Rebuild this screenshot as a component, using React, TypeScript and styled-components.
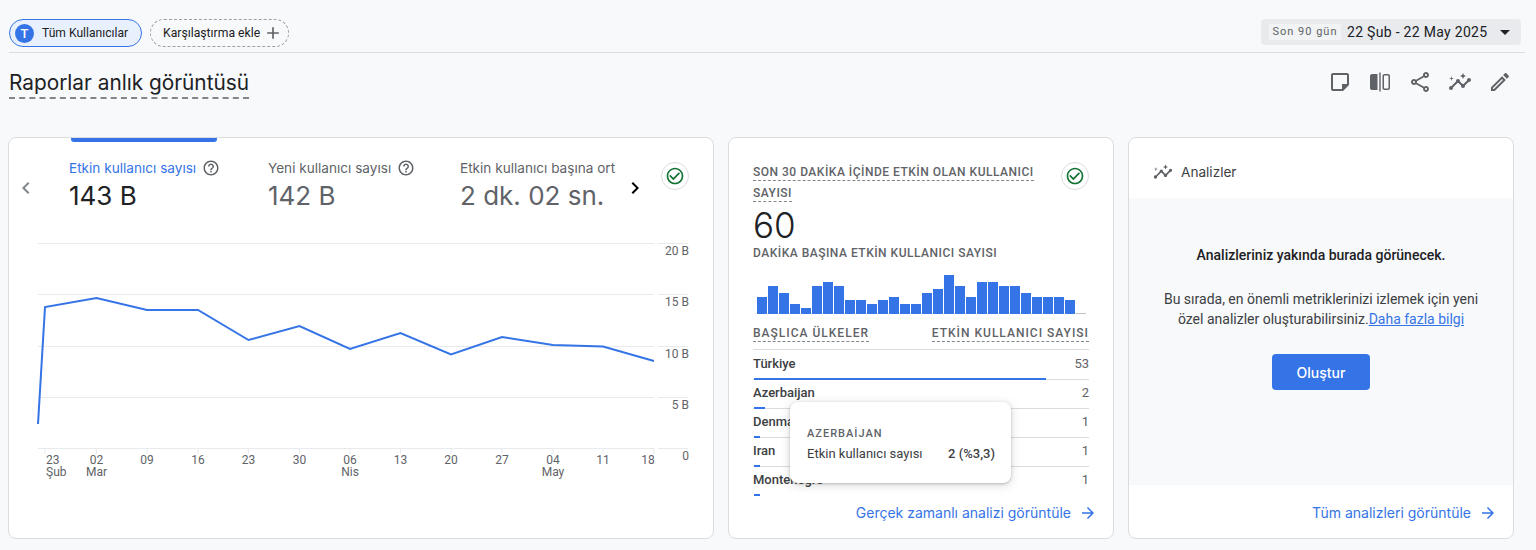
import React from "react";
import styled, { createGlobalStyle } from "styled-components";
import {
	MdAdd,
	MdArrowDropDown,
	MdArrowForward,
	MdCheckCircleOutline,
	MdChevronLeft,
	MdChevronRight,
	MdHelpOutline,
	MdOutlineEdit,
	MdOutlineInsights,
	MdOutlineShare,
} from "react-icons/md";

const BLUE = "#3574e6";
const GREY = "#5f6368";
const DARK = "#202124";
const DISPLAY = `Inter, "Noto Sans", sans-serif`;

const GRID_Y = [243.5, 294.5, 346.5, 397.5, 448.5];
const Y_LABELS = ["20 B", "15 B", "10 B", "5 B", "0"];
const X_TICKS = [
	{ x: 45, day: "23", month: "Şub" },
	{ x: 96.5, day: "02", month: "Mar" },
	{ x: 147, day: "09" },
	{ x: 198, day: "16" },
	{ x: 248.5, day: "23" },
	{ x: 299.5, day: "30" },
	{ x: 350, day: "06", month: "Nis" },
	{ x: 400.5, day: "13" },
	{ x: 451, day: "20" },
	{ x: 502, day: "27" },
	{ x: 553, day: "04", month: "May" },
	{ x: 603, day: "11" },
	{ x: 648, day: "18" },
];
const LINE =
	"38,424 45,307 96.5,298 147,310 198,310 248.5,340 299.5,326 350,349 400.5,333 451,354.5 502,337 553,345 603,346.5 654,361";
const MINUTE_BARS = [
	17, 28, 21, 10, 6, 28, 32, 28, 14, 14, 10, 14, 17, 10, 10, 21, 25, 39, 28, 17,
	32, 32, 28, 28, 21, 17, 17, 17, 14, 1,
];
const COUNTRIES = [
	{ name: "Türkiye", value: 53, width: 292 },
	{ name: "Azerbaijan", value: 2, width: 11 },
	{ name: "Denmark", value: 1, width: 6 },
	{ name: "Iran", value: 1, width: 6 },
	{ name: "Montenegro", value: 1, width: 6 },
];

const NoteIcon = () => (
	<svg width="24" height="24" viewBox="0 0 24 24" fill="#5f6368">
		<path d="M19 5v9h-5v5H5V5h14m0-2H5c-1.1 0-2 .9-2 2v14c0 1.1.9 2 2 2h10l6-6V5c0-1.1-.9-2-2-2z" />
		<path d="M15 15h5l-5 5z" />
	</svg>
);

const CompareIcon = () => (
	<svg width="24" height="24" viewBox="0 0 24 24" fill="#5f6368">
		<path d="M4 4h5.5v16H4c-1.1 0-2-.9-2-2V6c0-1.1.9-2 2-2z" />
		<path d="M11.3 2.5h1.4v19h-1.4z" />
		<path d="M20 4h-3.5c-1.1 0-2 .9-2 2v12c0 1.1.9 2 2 2H20c1.1 0 2-.9 2-2V6c0-1.1-.9-2-2-2zm.5 14c0 .3-.2.5-.5.5h-3.5c-.3 0-.5-.2-.5-.5V6c0-.3.2-.5.5-.5H20c.3 0 .5.2.5.5z" />
	</svg>
);

const App: React.FC = () => {
	return (
		<Page>
			<GlobalStyle />
			<TopBar>
				<Chips>
					<UserChip>
						<Avatar>T</Avatar>
						Tüm Kullanıcılar
					</UserChip>
					<AddChip>
						Karşılaştırma ekle
						<MdAdd size={20} color={GREY} />
					</AddChip>
				</Chips>
				<DateBox>
					<DateTag>Son 90 gün</DateTag>
					<DateText>22 Şub - 22 May 2025</DateText>
					<MdArrowDropDown size={24} color={DARK} />
				</DateBox>
			</TopBar>

			<TitleRow>
				<Title>Raporlar anlık görüntüsü</Title>
				<Actions>
					<NoteIcon />
					<CompareIcon />
					<MdOutlineShare size={24} color={GREY} />
					<MdOutlineInsights size={24} color={GREY} />
					<MdOutlineEdit size={24} color={GREY} />
				</Actions>
			</TitleRow>

			<Cards>
				<Card>
					<TabsRow>
						<Chevron $color="#80868b">
							<MdChevronLeft size={24} />
						</Chevron>
						<Tab $width={199} $active>
							<TabLabel $active>
								Etkin kullanıcı sayısı
								<MdHelpOutline size={18} color={GREY} />
							</TabLabel>
							<TabValue $active>143 B</TabValue>
						</Tab>
						<Tab $width={192}>
							<TabLabel>
								Yeni kullanıcı sayısı
								<MdHelpOutline size={18} color={GREY} />
							</TabLabel>
							<TabValue>142 B</TabValue>
						</Tab>
						<Tab $width={163}>
							<TabLabel>Etkin kullanıcı başına ort</TabLabel>
							<TabValue>2 dk. 02 sn.</TabValue>
						</Tab>
						<Chevron $color="#000">
							<MdChevronRight size={24} />
						</Chevron>
						<StatusBadge>
							<MdCheckCircleOutline size={20} color="#137333" />
						</StatusBadge>
					</TabsRow>
					<ChartSvg viewBox="9 238 704 250" width="704" height="250">
						{GRID_Y.map((y, i) => (
							<g key={y}>
								<line x1="38" x2="654" y1={y} y2={y} stroke="#e8eaed" />
								<line x1="658" x2="688" y1={y} y2={y} stroke="#e8eaed" />
								<AxisText x="689" y={y + 11.5} textAnchor="end">
									{Y_LABELS[i]}
								</AxisText>
							</g>
						))}
						{X_TICKS.map((t, i) => (
							<g key={t.x}>
								<line
									x1={i === 12 ? 654 : t.x}
									x2={i === 12 ? 654 : t.x}
									y1="448"
									y2="454"
									stroke="#e8eaed"
								/>
								<AxisText x={i === 0 ? 46 : t.x} y="464" textAnchor={i === 0 ? "start" : "middle"}>
									{t.day}
								</AxisText>
								{t.month && (
									<AxisText x={i === 0 ? 46 : t.x} y="476" textAnchor={i === 0 ? "start" : "middle"}>
										{t.month}
									</AxisText>
								)}
							</g>
						))}
						<polyline points={LINE} fill="none" stroke={BLUE} strokeWidth="2" />
					</ChartSvg>
				</Card>

				<RealtimeCard>
					<RealtimeHead>
						<RealtimeTitle>
							<Dashed>SON 30 DAKİKA İÇİNDE ETKİN OLAN KULLANICI SAYISI</Dashed>
						</RealtimeTitle>
						<StatusBadge>
							<MdCheckCircleOutline size={20} color="#137333" />
						</StatusBadge>
					</RealtimeHead>
					<BigNumber>60</BigNumber>
					<SmallHeading $spacing={0.5}>DAKİKA BAŞINA ETKİN KULLANICI SAYISI</SmallHeading>
					<Bars>
						{MINUTE_BARS.map((h, i) => (
							<MinuteBar key={i} $height={h} $empty={h === 1} />
						))}
					</Bars>
					<ListHead>
						<SmallHeading $spacing={1}>
							<Dashed>BAŞLICA ÜLKELER</Dashed>
						</SmallHeading>
						<SmallHeading $spacing={1}>
							<Dashed>ETKİN KULLANICI SAYISI</Dashed>
						</SmallHeading>
					</ListHead>
					<CountryList>
						{COUNTRIES.map((c) => (
							<CountryRow key={c.name}>
								<CountryLine>
									<CountryName>{c.name}</CountryName>
									<CountryValue>{c.value}</CountryValue>
								</CountryLine>
								<CountryBar $width={c.width} />
							</CountryRow>
						))}
					</CountryList>
					<CardLink>
						Gerçek zamanlı analizi görüntüle
						<MdArrowForward size={18} />
					</CardLink>
					<Tooltip>
						<TooltipTitle>AZERBAİJAN</TooltipTitle>
						<TooltipRow>
							<span>Etkin kullanıcı sayısı</span>
							<strong>2 (%3,3)</strong>
						</TooltipRow>
					</Tooltip>
				</RealtimeCard>

				<InsightCard>
					<InsightHead>
						<MdOutlineInsights size={20} color={GREY} />
						Analizler
					</InsightHead>
					<InsightBody>
						<InsightTitle>Analizleriniz yakında burada görünecek.</InsightTitle>
						<InsightText>
							Bu sırada, en önemli metriklerinizi izlemek için yeni özel analizler
							oluşturabilirsiniz.<InsightAnchor>Daha fazla bilgi</InsightAnchor>
						</InsightText>
						<CreateButton>Oluştur</CreateButton>
					</InsightBody>
					<InsightFoot>
						<CardLink>
							Tüm analizleri görüntüle
							<MdArrowForward size={18} />
						</CardLink>
					</InsightFoot>
				</InsightCard>
			</Cards>
		</Page>
	);
};

const GlobalStyle = createGlobalStyle`
	html, body {
		margin: 0;
		padding: 0;
		background: #f8f9fb;
	}
	body {
		font-family: Roboto, "Liberation Sans", sans-serif;
		color: ${DARK};
		overflow: hidden;
	}
`;

const Page = styled.div`
	width: 1536px;
	height: 550px;
	box-sizing: border-box;
	overflow: hidden;
`;

const TopBar = styled.div`
	display: flex;
	align-items: flex-start;
	justify-content: space-between;
	box-sizing: border-box;
	height: 34px;
	margin: 19px 11px 0 9px;
	padding-right: 4px;
	border-bottom: 1px solid #dadce0;
`;

const Chips = styled.div`
	display: flex;
	gap: 8px;
`;

const UserChip = styled.div`
	display: flex;
	align-items: center;
	box-sizing: border-box;
	width: 133px;
	height: 28px;
	padding-left: 5px;
	gap: 8px;
	border: 1px solid ${BLUE};
	border-radius: 14px;
	background: #e8f0fe;
	font-size: 12.1px;
`;

const Avatar = styled.div`
	display: flex;
	align-items: center;
	justify-content: center;
	width: 19px;
	height: 19px;
	border-radius: 50%;
	background: ${BLUE};
	color: #fff;
	font-size: 13px;
	font-weight: 500;
`;

const AddChip = styled.div`
	display: flex;
	align-items: center;
	box-sizing: border-box;
	width: 139px;
	height: 28px;
	padding-left: 12px;
	gap: 3px;
	border: 1px dashed #9aa0a6;
	border-radius: 14px;
	font-size: 12.2px;
`;

const DateBox = styled.div`
	display: flex;
	align-items: center;
	box-sizing: border-box;
	width: 260px;
	height: 26px;
	padding-left: 8px;
	border-radius: 4px;
	background: #e8eaed;
`;

const DateTag = styled.div`
	box-sizing: border-box;
	width: 72px;
	height: 16px;
	background: #f1f3f4;
	color: ${GREY};
	font-size: 11px;
	letter-spacing: 1px;
	line-height: 16px;
	text-align: center;
`;

const DateText = styled.div`
	width: 146px;
	margin-left: 6px;
	font-size: 14px;
	letter-spacing: 0.3px;
`;

const TitleRow = styled.div`
	display: flex;
	align-items: flex-start;
	justify-content: space-between;
	box-sizing: border-box;
	height: 84px;
	padding: 16px 24px 0 9px;
`;

const Title = styled.h1`
	margin: 0;
	padding-bottom: 1px;
	border-bottom: 2px dashed #80868b;
	color: ${DARK};
	font-family: ${DISPLAY};
	font-size: 20.8px;
	font-weight: 400;
	line-height: 27px;
`;

const Actions = styled.div`
	display: flex;
	gap: 16px;
	margin-top: 1px;
`;

const Cards = styled.div`
	display: grid;
	grid-template-columns: 706px 386px 386px;
	gap: 14px;
	padding-left: 8px;
`;

const Card = styled.section`
	position: relative;
	box-sizing: border-box;
	height: 402px;
	border: 1px solid #dadce0;
	border-radius: 8px;
	background: #fff;
	overflow: hidden;
`;

const TabsRow = styled.div`
	display: flex;
	align-items: flex-start;
	box-sizing: border-box;
	height: 100px;
	padding-left: 5px;
`;

const Chevron = styled.div<{ $color: string }>`
	display: flex;
	width: 24px;
	margin-top: 38px;
	color: ${(props) => props.$color};

	&:first-child {
		margin-right: 31px;
	}
`;

const Tab = styled.div<{ $width: number; $active?: boolean }>`
	position: relative;
	box-sizing: border-box;
	width: ${(props) => props.$width}px;
	padding-top: 20px;

	&::before {
		content: "";
		display: ${(props) => (props.$active ? "block" : "none")};
		position: absolute;
		top: 0;
		left: 2px;
		width: 146px;
		height: 4px;
		border-radius: 0 0 3px 3px;
		background: ${BLUE};
	}
`;

const TabLabel = styled.div<{ $active?: boolean }>`
	display: flex;
	align-items: center;
	gap: 6px;
	height: 20px;
	color: ${(props) => (props.$active ? BLUE : GREY)};
	font-family: ${DISPLAY};
	font-size: 13.6px;
	white-space: nowrap;
`;

const TabValue = styled.div<{ $active?: boolean }>`
	margin-top: 2px;
	color: ${(props) => (props.$active ? DARK : GREY)};
	font-family: ${DISPLAY};
	font-size: 26px;
	line-height: 32px;
	white-space: nowrap;
`;

const StatusBadge = styled.div`
	display: flex;
	flex: none;
	align-items: center;
	justify-content: center;
	box-sizing: border-box;
	width: 28px;
	height: 28px;
	margin: 24px 0 0 14px;
	border: 1px solid #dadce0;
	border-radius: 50%;
	background: #fff;
`;

const ChartSvg = styled.svg`
	display: block;
`;

const AxisText = styled.text`
	fill: ${GREY};
	font-family: Roboto, sans-serif;
	font-size: 12px;
`;

const RealtimeCard = styled(Card)`
	padding: 0 24px;
`;

const RealtimeHead = styled.div`
	display: flex;
	align-items: flex-start;
	justify-content: space-between;
	padding-top: 24px;

	${StatusBadge} {
		margin: 0;
	}
`;

const RealtimeTitle = styled.div`
	width: 284px;
	color: ${GREY};
	font-size: 12px;
	font-weight: 500;
	letter-spacing: 0.5px;
	line-height: 21px;
`;

const Dashed = styled.span`
	padding-bottom: 1px;
	border-bottom: 1px dashed #80868b;
`;

const BigNumber = styled.div`
	margin-top: 1px;
	color: ${DARK};
	font-family: ${DISPLAY};
	font-size: 35px;
	font-weight: 300;
	line-height: 40px;
`;

const SmallHeading = styled.div<{ $spacing: number }>`
	color: ${GREY};
	font-size: 12px;
	font-weight: 500;
	letter-spacing: ${(props) => props.$spacing}px;
	line-height: 16px;
	white-space: nowrap;
`;

const Bars = styled.div`
	display: flex;
	align-items: flex-end;
	gap: 1px;
	height: 39px;
	margin: 14px 0 0 4px;
`;

const MinuteBar = styled.div<{ $height: number; $empty?: boolean }>`
	width: 10px;
	height: ${(props) => props.$height}px;
	background: ${(props) => (props.$empty ? "#bdc1c6" : BLUE)};
`;

const ListHead = styled.div`
	display: flex;
	justify-content: space-between;
	margin-top: 11px;
`;

const CountryList = styled.div`
	margin-top: 8px;
	padding-top: 1px;
	border-top: 1px solid #dadce0;
`;

const CountryRow = styled.div`
	box-sizing: border-box;
	height: 29px;
	padding-top: 4px;
	border-bottom: 1px solid #dadce0;

	&:last-child {
		border-bottom: 0;
	}
`;

const CountryLine = styled.div`
	display: flex;
	justify-content: space-between;
	height: 18px;
	font-size: 13px;
	line-height: 18px;
`;

const CountryName = styled.span`
	color: #3c4043;
	font-weight: 500;
`;

const CountryValue = styled.span`
	color: ${GREY};
`;

const CountryBar = styled.div<{ $width: number }>`
	position: relative;
	width: ${(props) => props.$width}px;
	height: 2px;
	margin: 5px 0 0 1px;
	background: ${BLUE};
`;

const CardLink = styled.a`
	display: flex;
	align-items: center;
	justify-content: flex-end;
	gap: 8px;
	margin: 7px -8px 0 0;
	color: ${BLUE};
	font-family: ${DISPLAY};
	font-size: 14px;
	line-height: 20px;
	cursor: pointer;
`;

const Tooltip = styled.div`
	position: absolute;
	left: 61px;
	top: 264px;
	box-sizing: border-box;
	width: 221px;
	height: 81px;
	padding: 24px 16px 0 17px;
	border-radius: 8px;
	background: #fff;
	box-shadow: 0 1px 3px rgba(60, 64, 67, 0.3), 0 2px 8px 2px rgba(60, 64, 67, 0.12);
`;

const TooltipTitle = styled.div`
	color: ${GREY};
	font-size: 11px;
	font-weight: 500;
	letter-spacing: 1px;
	line-height: 16px;
`;

const TooltipRow = styled.div`
	display: flex;
	justify-content: space-between;
	margin-top: 4px;
	color: #3c4043;
	font-size: 13px;
	line-height: 16px;

	strong {
		font-weight: 500;
	}
`;

const InsightCard = styled(Card)`
	display: flex;
	flex-direction: column;
`;

const InsightHead = styled.div`
	display: flex;
	flex: none;
	align-items: center;
	gap: 8px;
	box-sizing: border-box;
	height: 60px;
	padding: 8px 0 0 24px;
	color: #3c4043;
	font-family: ${DISPLAY};
	font-size: 13.6px;
`;

const InsightBody = styled.div`
	display: flex;
	flex: none;
	flex-direction: column;
	align-items: center;
	box-sizing: border-box;
	height: 287px;
	padding-top: 47px;
	background: #f8f9fa;
	text-align: center;
`;

const InsightTitle = styled.div`
	color: ${DARK};
	font-size: 14px;
	font-weight: 500;
	line-height: 20px;
`;

const InsightText = styled.div`
	width: 330px;
	margin-top: 24px;
	color: #3c4043;
	font-size: 14px;
	line-height: 20px;
`;

const InsightAnchor = styled.a`
	color: ${BLUE};
	text-decoration: underline;
`;

const CreateButton = styled.button`
	width: 98px;
	height: 36px;
	margin-top: 25px;
	border: 0;
	border-radius: 4px;
	background: ${BLUE};
	color: #fff;
	font-family: ${DISPLAY};
	font-size: 14px;
	font-weight: 500;
`;

const InsightFoot = styled.div`
	padding: 9px 16px 0 0;

	${CardLink} {
		margin: 9px 0 0;
	}
`;

export default App;
